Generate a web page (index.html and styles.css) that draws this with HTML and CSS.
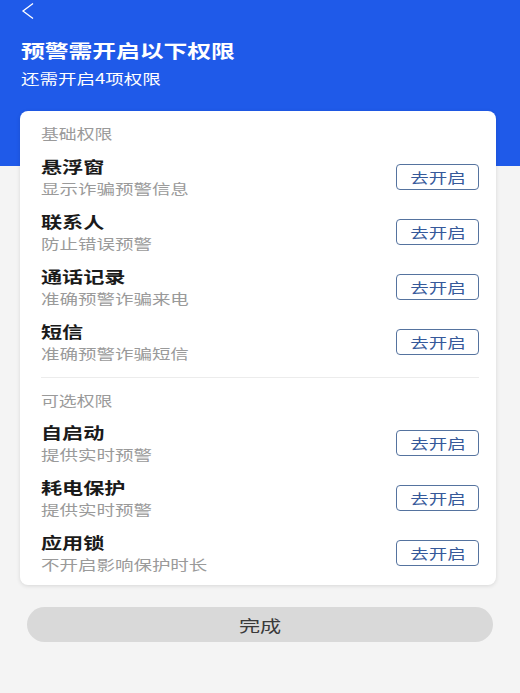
FILE: index.html
```html
<!DOCTYPE html>
<html lang="zh-CN">
<head>
<meta charset="UTF-8">
<meta name="viewport" content="width=device-width, initial-scale=1.0">
<title>权限设置</title>
<link rel="stylesheet" href="styles.css">
</head>
<body>
<div class="header">
    <div class="back">
        <svg width="14" height="18" viewBox="0 0 14 18"><path d="M12 1.5 L2 9 L12 16.5" fill="none" stroke="#fff" stroke-width="1.3"/></svg>
    </div>
    <h1 class="title">预警需开启以下权限</h1>
    <p class="subtitle">还需开启4项权限</p>
</div>

<div class="card">
    <div class="section-label">基础权限</div>
    <div class="row">
        <div class="info">
            <div class="name">悬浮窗</div>
            <div class="desc">显示诈骗预警信息</div>
        </div>
        <button class="open-btn"><span>去开启</span></button>
    </div>
    <div class="row">
        <div class="info">
            <div class="name">联系人</div>
            <div class="desc">防止错误预警</div>
        </div>
        <button class="open-btn"><span>去开启</span></button>
    </div>
    <div class="row">
        <div class="info">
            <div class="name">通话记录</div>
            <div class="desc">准确预警诈骗来电</div>
        </div>
        <button class="open-btn"><span>去开启</span></button>
    </div>
    <div class="row">
        <div class="info">
            <div class="name">短信</div>
            <div class="desc">准确预警诈骗短信</div>
        </div>
        <button class="open-btn"><span>去开启</span></button>
    </div>

    <div class="divider"></div>

    <div class="section-label optional">可选权限</div>
    <div class="row">
        <div class="info">
            <div class="name">自启动</div>
            <div class="desc">提供实时预警</div>
        </div>
        <button class="open-btn"><span>去开启</span></button>
    </div>
    <div class="row">
        <div class="info">
            <div class="name">耗电保护</div>
            <div class="desc">提供实时预警</div>
        </div>
        <button class="open-btn"><span>去开启</span></button>
    </div>
    <div class="row">
        <div class="info">
            <div class="name">应用锁</div>
            <div class="desc">不开启影响保护时长</div>
        </div>
        <button class="open-btn"><span>去开启</span></button>
    </div>
</div>

<button class="done-btn"><span>完成</span></button>
</body>
</html>
```

FILE: styles.css
```css
body {
    margin: 0;
    padding: 0;
    background-color: #f4f4f4;
    font-family: "Noto Sans CJK SC", "Noto Sans", sans-serif;
    color: #222;
}

/* the app renders its text a bit wide */
.title,
.subtitle,
.section-label,
.name,
.desc {
    width: fit-content;
    transform: scaleX(1.32);
    transform-origin: left center;
}

.open-btn span,
.done-btn span {
    display: inline-block;
    transform: scaleX(1.32);
}

.header {
    background-color: #1f5ae9;
    height: 166px;
    padding: 0 21px;
    box-sizing: border-box;
    color: #fff;
}

.back {
    height: 20px;
    padding-top: 1px;
}

.title {
    margin: 17px 0 0;
    font-size: 18px;
    line-height: 24px;
    font-weight: bold;
}

.subtitle {
    margin: 6px 0 0;
    font-size: 14px;
    line-height: 20px;
}

.card {
    background: #fff;
    margin: -55px 24px 0 20px;
    border-radius: 8px;
    padding: 12px 17px 4px 21px;
    box-shadow: 0 1px 4px rgba(0, 0, 0, 0.12);
}

.section-label {
    font-size: 13.5px;
    line-height: 20px;
    color: #9a9a9a;
    margin-bottom: 7px;
}

.section-label.optional {
    margin-top: 12px;
    margin-bottom: 6px;
}

.row {
    height: 55px;
    display: flex;
    align-items: center;
    justify-content: space-between;
}

.name {
    font-size: 16px;
    line-height: 20px;
    font-weight: bold;
    color: #1a1a1a;
}

.desc {
    font-size: 14px;
    line-height: 24px;
    color: #9a9a9a;
}

.open-btn {
    width: 83px;
    height: 26px;
    margin-bottom: 2px;
    border: 1px solid #55739f;
    border-radius: 4px;
    background: #fff;
    color: #36599a;
    font-family: inherit;
    font-size: 14px;
    padding: 0;
}

.divider {
    height: 1px;
    background: #ececec;
    margin-top: 7px;
}

.done-btn {
    display: block;
    width: 466px;
    height: 35px;
    margin: 22px 0 0 27px;
    border: none;
    border-radius: 18px;
    background: #d9d9d9;
    color: #3a3a3a;
    font-family: inherit;
    font-size: 16px;
    padding: 0;
}
```
